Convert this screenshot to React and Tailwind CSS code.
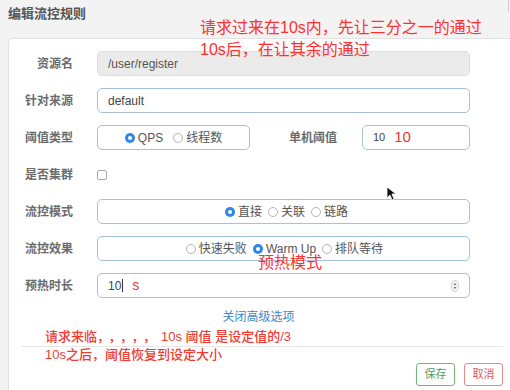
import React from 'react';

const font = "font-['Liberation_Sans','Noto_Sans_CJK_SC',sans-serif]";

function Radio({ checked, label }) {
  return (
    <span className="flex items-center gap-[3px]">
      {checked ? (
        <span className="w-[10px] h-[10px] rounded-full bg-[#2f86e6] flex items-center justify-center">
          <span className="w-[4px] h-[4px] rounded-full bg-white" />
        </span>
      ) : (
        <span className="w-[10px] h-[10px] rounded-full border border-[#b5b5b5] bg-white" />
      )}
      <span>{label}</span>
    </span>
  );
}

function Row({ label, children }) {
  return (
    <div className="flex items-center h-[25px]">
      <div className="w-[64px] text-right text-[12px] font-bold text-[#6b6b6b]">{label}</div>
      <div className="ml-[24px] flex items-center">{children}</div>
    </div>
  );
}

const boxCls = 'h-[25px] border border-[#a7c1da] rounded-[5px] bg-white flex items-center text-[12px] text-[#444]';

export default function App() {
  return (
    <div className={`w-[510px] h-[390px] bg-[#f3f3f3] relative overflow-hidden ${font}`}>
      {/* Header */}
      <div className="h-[38px] pl-2 pt-[6px] text-[13px] leading-[16px] font-bold text-[#555]">编辑流控规则</div>
      <div className="absolute right-[1px] top-0 w-[1px] h-[12px] bg-[#cfcfcf]" />

      {/* Card */}
      <div className="ml-2 h-[352px] bg-white border-l border-t border-[#e2e2e2] rounded-tl-[4px] pt-[12px]">
        <div className="flex flex-col gap-[12px]">
          <Row label="资源名">
            <div className="w-[373px] h-[25px] border border-[#dcdcdc] rounded-[5px] bg-[#ebebeb] flex items-center pl-[10px] text-[12px] text-[#555]">
              /user/register
            </div>
          </Row>
          <Row label="针对来源">
            <div className={`${boxCls} w-[373px] pl-[10px]`}>default</div>
          </Row>
          <Row label="阈值类型">
            <div className={`${boxCls} w-[153px] justify-center gap-[10px] text-[#555]`}>
              <Radio checked label="QPS" />
              <Radio label="线程数" />
            </div>
            <div className="w-[87px] text-right text-[12px] font-bold text-[#6b6b6b]">单机阈值</div>
            <div className={`${boxCls} ml-[25px] w-[108px] pl-[10px]`}>
              <span className="text-[11px] text-[#444]">10</span>
              <span className="ml-[9px] text-[15px] font-medium text-[#f0362d]">10</span>
            </div>
          </Row>
          <Row label="是否集群">
            <span className="w-[10px] h-[10px] border border-[#a9a9a9] rounded-[2px] bg-white" />
          </Row>
          <Row label="流控模式">
            <div className={`${boxCls} w-[373px] justify-center gap-[6px] pl-[6px] text-[#555]`}>
              <Radio checked label="直接" />
              <Radio label="关联" />
              <Radio label="链路" />
            </div>
          </Row>
          <Row label="流控效果">
            <div className={`${boxCls} w-[373px] justify-center gap-[6px] pl-[2px] text-[#555]`}>
              <Radio label="快速失败" />
              <Radio checked label="Warm Up" />
              <Radio label="排队等待" />
            </div>
          </Row>
          <Row label="预热时长">
            <div className={`${boxCls} w-[373px] pl-[10px] pr-[10px]`}>
              <span>10</span>
              <span className="w-[1px] h-[13px] bg-[#333] ml-[1px]" />
              <span className="ml-[9px] text-[14px] text-[#f0362d]">s</span>
              <svg className="ml-auto" width="8" height="12" viewBox="0 0 8 12">
                <rect x="0.5" y="0.5" width="7" height="11" rx="3.5" fill="#f4f4f4" stroke="#d6d6d6" />
                <path d="M2.5 5L4 3l1.5 2z" fill="#777" />
                <path d="M2.5 7L4 9l1.5-2z" fill="#777" />
              </svg>
            </div>
          </Row>
        </div>

        <div className="mt-[11px] text-center pr-[2px] text-[12px] leading-[16px] text-[#3f88c5]">关闭高级选项</div>

        {/* Footer */}
        <div className="mt-[21px] ml-[12px] mr-[7px] border-t border-[#e6e6e6] pt-[16px] flex justify-end gap-[9px]">
          <button className="w-[39px] h-[23px] border border-[#6fb77f] rounded-[3px] text-[11px] text-[#4e9d5e] bg-white">保存</button>
          <button className="w-[39px] h-[23px] border border-[#e08a8a] rounded-[3px] text-[11px] text-[#d65a5a] bg-white">取消</button>
        </div>
      </div>

      {/* Red annotations */}
      <div className="absolute left-[200px] top-[17px] text-[16px] leading-[22px] text-[#ff3030] whitespace-nowrap">
        <div>请求过来在10s内，先让三分之一的通过</div>
        <div>10s后，在让其余的通过</div>
      </div>
      <div className="absolute left-[258px] top-[252px] text-[16px] leading-[22px] text-[#ff3030]">预热模式</div>
      <div className="absolute left-[45px] top-[328px] text-[13px] leading-[18px] font-medium text-[#ef3b32] whitespace-nowrap">
        <div>
          请求来临<span className="tracking-[5px]">，，，，，</span>10s 阈值 是设定值的/3
        </div>
        <div>10s之后，阈值恢复到设定大小</div>
      </div>

      {/* Mouse pointer */}
      <svg className="absolute left-[386px] top-[186px]" width="10" height="15" viewBox="0 0 10 15">
        <path d="M1 1v11l3-3 2 5 2-1-2-5h4z" fill="#111" stroke="#fff" strokeWidth="0.8" />
      </svg>
    </div>
  );
}
